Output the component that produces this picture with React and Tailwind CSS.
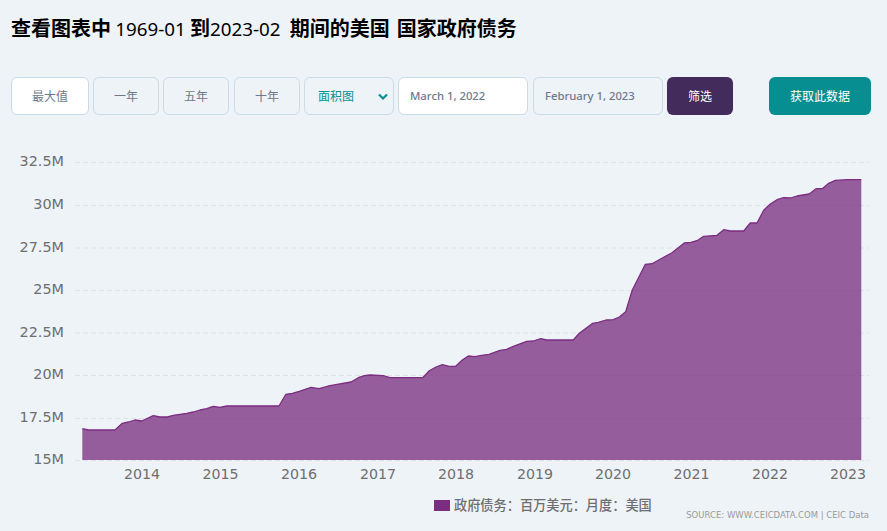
const pts = [[82.3,428.7],[88.3,430],[115,430],[122.3,423.3],[128.3,422],[135,420],[141.7,421],[153.3,415.7],[160,417],[167.3,417],[173.3,415.3],[186.7,413.3],[193.3,412],[200,410],[206.7,408.7],[213.3,406.3],[220,407.3],[226.7,406],[279,406],[285.7,394.5],[292.3,393.3],[299.3,391.3],[311,387.3],[319,388.7],[330,385.7],[351,382],[358.3,377.7],[364.3,375.7],[370,375],[383.3,375.7],[390,377.7],[422.7,377.7],[429.3,370.7],[436,367],[442.3,364.7],[449,366.3],[455.7,366.3],[462.3,360],[468.3,356],[475,356.7],[481.7,355.3],[489,354.3],[500,350.3],[506.7,349.3],[513.3,346.3],[526.7,341.3],[533.3,341],[540.7,338.7],[546.7,340],[573.3,340],[579.3,333.3],[592.7,323.3],[598.3,322.3],[606,320],[613.3,319.7],[619.3,317],[625.7,311.7],[632.3,290],[645.2,264.5],[652,263.7],[672,252.7],[684.3,243],[691,242.3],[697.7,240.3],[703.7,236.3],[717,235.3],[723.7,229.7],[730.3,231],[743.7,231],[750.3,223],[757,223],[763.7,210.3],[770.3,204],[777,199.7],[783.7,197.7],[790.3,198],[797,196],[809.3,194],[816,188.7],[822.3,188.7],[828.7,183.3],[835.3,180.3],[847,179.7],[861.3,179.7]];
const TOP = 140;
const line = pts.map(([x, y]) => `${x},${y - TOP}`).join(" ");
const area = `82.3,${460 - TOP} ${line} 861.3,${460 - TOP}`;
const yTicks = [["32.5M",162],["30M",205],["27.5M",247.5],["25M",290],["22.5M",332.5],["20M",375],["17.5M",418],["15M",460]];
const xTicks = [["2014",142],["2015",220.5],["2016",299],["2017",378],["2018",456],["2019",535],["2020",613],["2021",691.5],["2022",770],["2023",848]];

const btn = "h-[38px] flex items-center justify-center rounded-md border border-[#c9dbe6] text-[12px] pt-[2px] text-[#6c7a8c] shrink-0";

export default function App() {
  return (
    <div className="w-[887px] h-[531px] overflow-hidden bg-[#eef3f8] font-['Noto_Sans','Noto_Sans_CJK_SC',sans-serif]">
      <h1 className="pl-[11px] pt-[15px] h-[77px] text-[20px] leading-[28px] font-bold text-black whitespace-nowrap">
        查看图表中 <span className="font-normal text-[18.8px] -ml-[1px]">1969-01</span> <span className="-ml-[1px]">到</span><span className="font-normal text-[18.8px]">2023-02</span> <span className="ml-[4px]">期间的美国</span> <span className="ml-[2px]">国家政府债务</span>
      </h1>
      <div className="flex pl-[11px] h-[38px]">
        <div className={`${btn} w-[78px] bg-white`}>最大值</div>
        <div className={`${btn} w-[66px] ml-[4px]`}>一年</div>
        <div className={`${btn} w-[66px] ml-[4px]`}>五年</div>
        <div className={`${btn} w-[66px] ml-[5px]`}>十年</div>
        <div className={`${btn} w-[90px] ml-[4px] !justify-between pl-[13px] pr-[4px] !text-[#0a8f91]`}>
          <span>面积图</span>
          <svg width="12" height="8" viewBox="0 0 12 8" fill="none" stroke="#0a8f91" strokeWidth="2.2"><path d="M2 1.5 L6 5.5 L10 1.5" /></svg>
        </div>
        <div className={`${btn} w-[130px] ml-[4px] bg-white !justify-start pl-[11px] !pt-0 !text-[11.3px] font-medium`}>March 1, 2022</div>
        <div className={`${btn} w-[130px] ml-[5px] !justify-start pl-[11px] !pt-0 !text-[11.3px] font-medium`}>February 1, 2023</div>
        <div className="h-[38px] w-[66px] ml-[4px] pt-[2px] flex items-center justify-center rounded-md bg-[#432c5c] text-[12px] text-white">筛选</div>
        <div className="h-[38px] w-[102px] ml-[36px] pt-[2px] flex items-center justify-center rounded-md bg-[#078e90] text-[12px] text-white">获取此数据</div>
      </div>
      <svg className="block mt-[25px]" width="887" height="391" viewBox="0 0 887 391">
        {yTicks.map(([label, y]) => (
          <g key={label}>
            <line x1="75" x2="869" y1={y - TOP + 0.5} y2={y - TOP + 0.5} stroke="#dfe3e6" strokeWidth="1" strokeDasharray="5 3" />
            <text x="64" y={y - TOP + 4} textAnchor="end" fontSize="14.4" fill="#6e6e6e" fontFamily="'DejaVu Sans',sans-serif">{label}</text>
          </g>
        ))}
        <polygon points={area} fill="#782b7d" fillOpacity="0.75" />
        <polyline points={line} fill="none" stroke="#7b2d82" strokeWidth="1.3" strokeLinejoin="round" />
        {xTicks.map(([label, x]) => (
          <text key={label} x={x} y={338.5} textAnchor="middle" fontSize="14.2" fill="#6e6e6e" fontFamily="'DejaVu Sans',sans-serif">{label}</text>
        ))}
        <rect x="434" y="360" width="16" height="11" fill="#7b2d82" />
        <text x="454" y="370" fontSize="13.2" fontWeight="500" fill="#6e6e6e" fontFamily="'Noto Sans CJK SC',sans-serif">政府债务：百万美元：月度：美国</text>
        <text x="869" y="378" textAnchor="end" fontSize="8.5" fill="#9a9a9a" fontFamily="'DejaVu Sans',sans-serif">SOURCE: WWW.CEICDATA.COM | CEIC Data</text>
      </svg>
    </div>
  );
}
